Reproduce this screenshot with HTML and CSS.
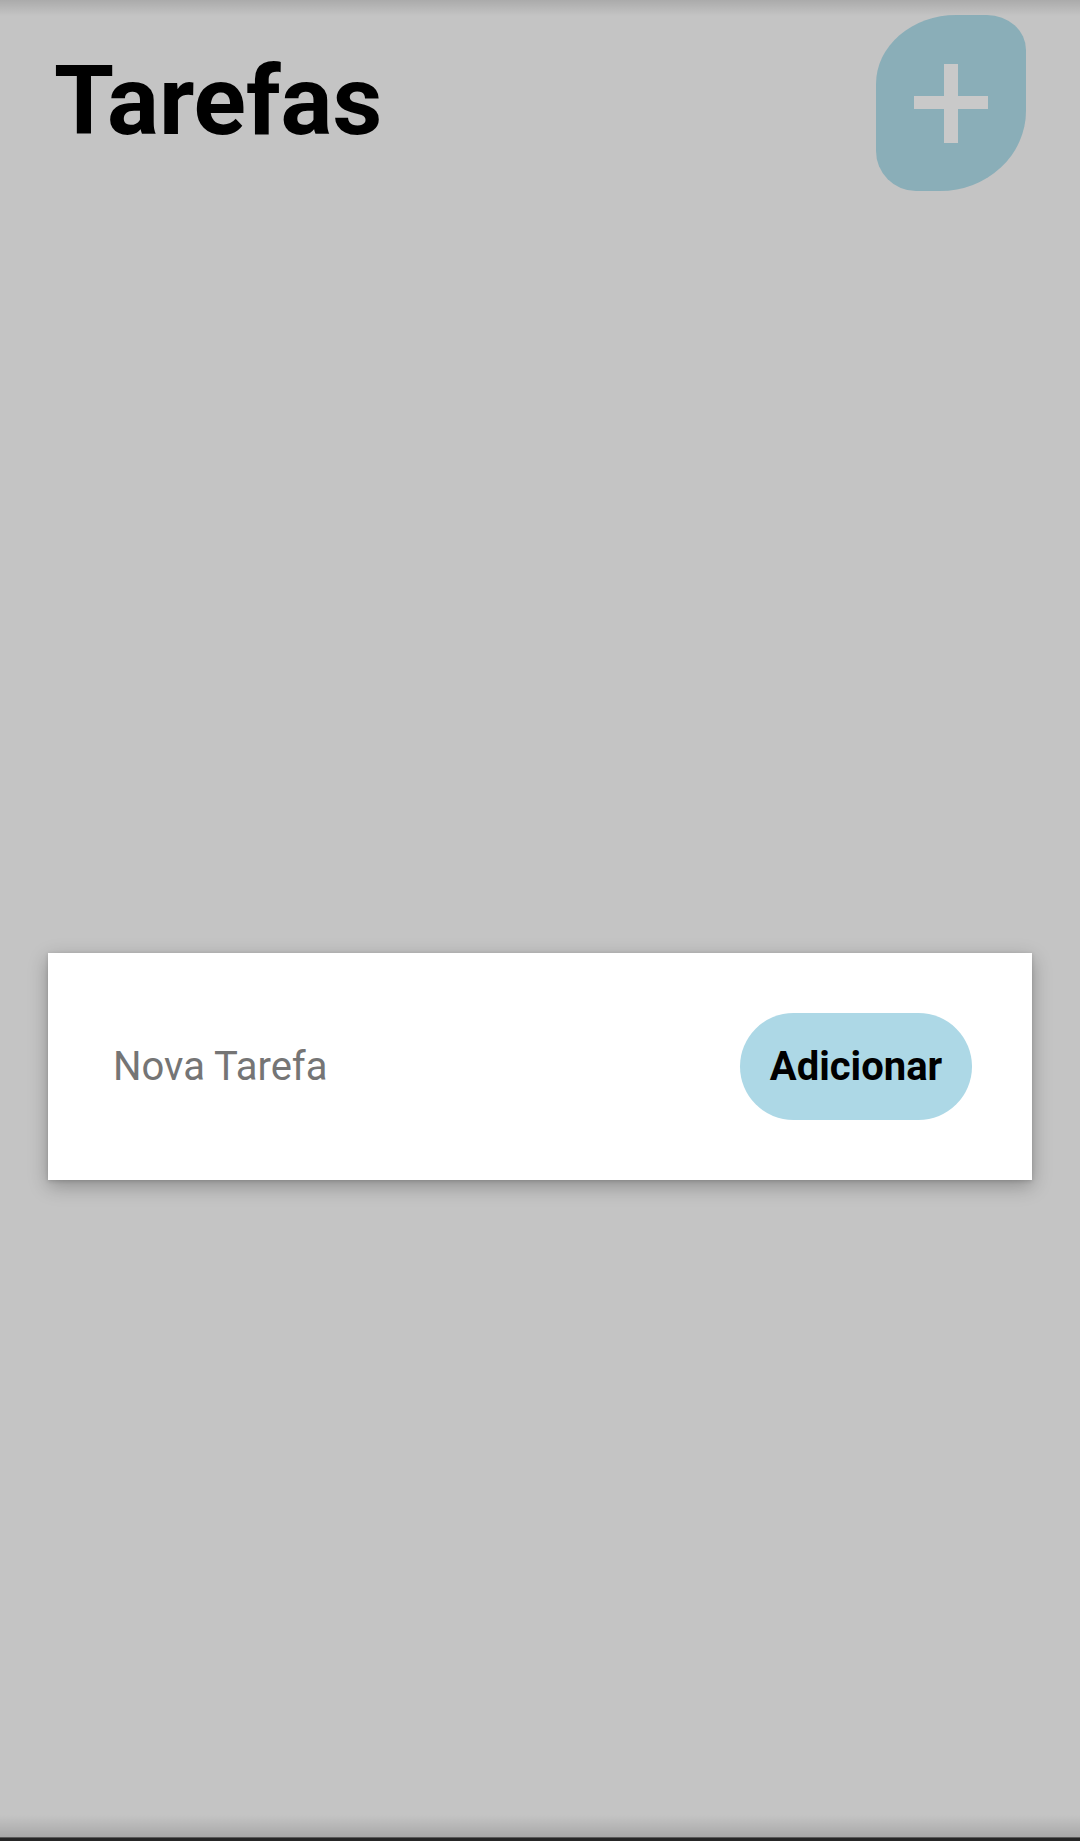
FILE: index.html
```html
<!DOCTYPE html>
<html lang="pt">
<head>
<meta charset="utf-8">
<title>Tarefas</title>
<link rel="stylesheet" href="styles.css">
</head>
<body>
<div class="screen">
  <div class="top-shade"></div>
  <header class="header">
    <h1 class="title">Tarefas</h1>
    <button class="fab" aria-label="Adicionar tarefa">
      <svg class="fab-icon" width="74" height="79" viewBox="0 0 74 79">
        <rect x="0" y="32" width="74" height="13" fill="#c9c9c9"/>
        <rect x="30" y="0" width="14" height="79" fill="#c9c9c9"/>
      </svg>
    </button>
  </header>
  <main class="content">
    <div class="dialog">
      <input class="task-input" type="text" placeholder="Nova Tarefa">
      <button class="add-btn">Adicionar</button>
    </div>
  </main>
  <div class="bottom-shade"></div>
  <div class="nav-edge"></div>
</div>
</body>
</html>
```

FILE: styles.css
```css
html, body {
  margin: 0;
  padding: 0;
}

body {
  background: #c4c4c4;
  font-family: Roboto, "Noto Sans", "Liberation Sans", sans-serif;
}

.screen {
  position: relative;
  width: 1080px;
  height: 1841px;
  overflow: hidden;
  display: flex;
  flex-direction: column;
}

.top-shade {
  position: absolute;
  left: 0;
  top: 0;
  width: 100%;
  height: 16px;
  background: linear-gradient(to bottom, rgba(0,0,0,0.13), rgba(0,0,0,0));
  pointer-events: none;
}

.header {
  display: flex;
  justify-content: space-between;
  align-items: flex-start;
  padding: 15px 54px 0 54px;
}

.title {
  margin: 38px 0 0 0;
  font-size: 97px;
  line-height: 1;
  font-weight: 700;
  color: #000;
}

.fab {
  width: 150px;
  height: 176px;
  border: none;
  padding: 0;
  background: #8aaeb8;
  border-radius: 80px 39px 86px 40px / 69px 35px 80px 40px;
  display: flex;
  align-items: center;
  justify-content: center;
}

.fab-icon {
  display: block;
}

.content {
  flex: 1;
  padding: 762px 48px 0 48px;
}

.dialog {
  background: #ffffff;
  height: 227px;
  box-sizing: border-box;
  padding: 60px 60px 60px 65px;
  display: flex;
  align-items: center;
  justify-content: space-between;
  box-shadow: 0 6px 18px rgba(0,0,0,0.28), 0 1px 4px rgba(0,0,0,0.15);
}

.task-input {
  border: none;
  outline: none;
  background: transparent;
  font-family: Roboto, "Noto Sans", "Liberation Sans", sans-serif;
  font-size: 40px;
  color: #222;
  padding: 0;
  width: 500px;
}

.task-input::placeholder {
  color: #757575;
}

.add-btn {
  height: 107px;
  width: 232px;
  border: none;
  border-radius: 54px;
  background: #add8e6;
  color: #000;
  font-family: Roboto, "Noto Sans", "Liberation Sans", sans-serif;
  font-size: 40px;
  font-weight: 700;
  padding: 0;
}

.bottom-shade {
  position: absolute;
  left: 0;
  bottom: 4px;
  width: 100%;
  height: 22px;
  background: linear-gradient(to top, rgba(0,0,0,0.14), rgba(0,0,0,0));
  pointer-events: none;
}

.nav-edge {
  position: absolute;
  left: 0;
  bottom: 0;
  width: 100%;
  height: 4px;
  background: #262626;
  border-top: 1px solid #5a5a5a;
  box-sizing: border-box;
}
```
